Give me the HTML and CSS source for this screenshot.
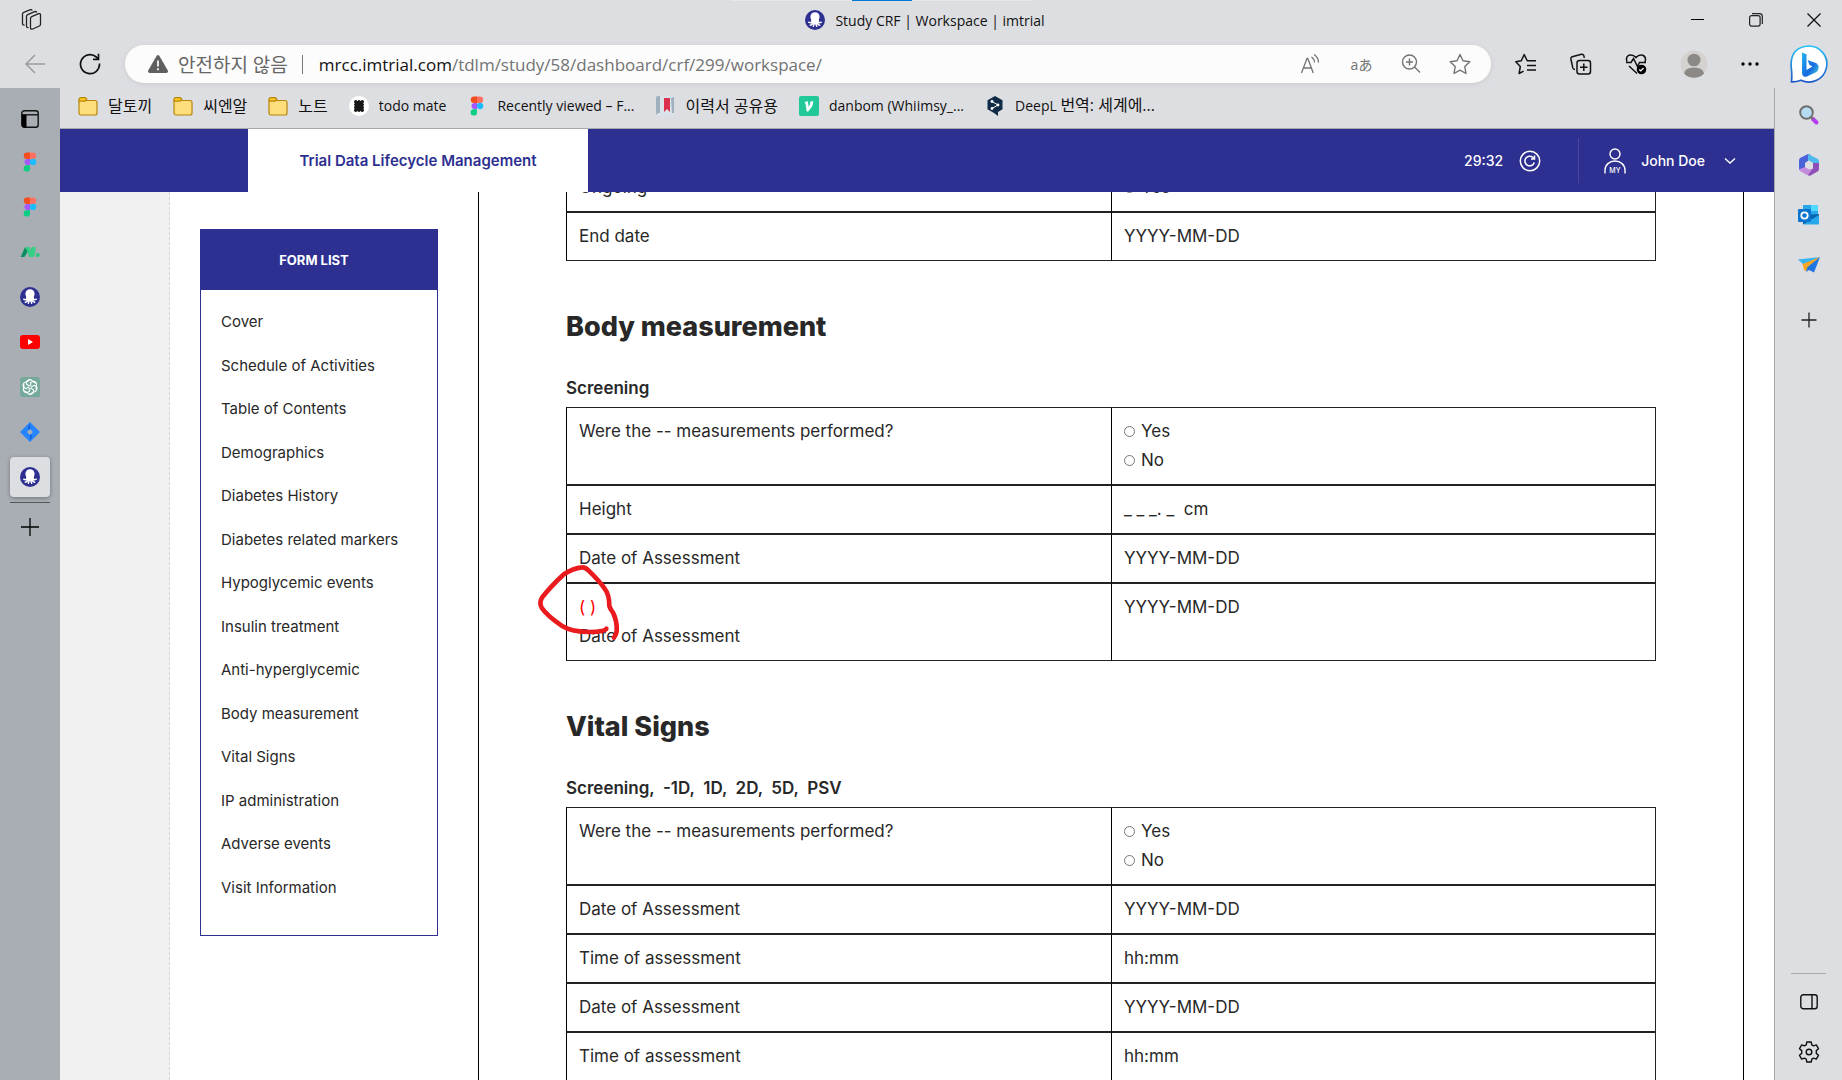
FILE: index.html
```html
<!DOCTYPE html>
<html lang="ko">
<head>
<meta charset="utf-8">
<meta name="viewport" content="width=device-width, initial-scale=1">
<title>Study CRF | Workspace | imtrial</title>
<link rel="stylesheet" href="styles.css">
</head>
<body>
<svg class="defs" aria-hidden="true">
  <symbol id="octopus" viewBox="0 0 20 20"><circle cx="10" cy="10" r="10" fill="#2d2f91"/><ellipse cx="10" cy="7" rx="4.600" ry="4.800" fill="#fff"/><path fill="#fff" d="M6.500 8.500h7l.8 4.500-4.300 1.500L5.700 13z"/><path fill="none" stroke="#fff" stroke-width="1.500" stroke-linecap="round" d="M7.500 11.500Q6.500 13.300 3.800 12.300M8 12.500Q7.500 14.800 5.300 15.200M9 13Q9 15.500 8.300 16.300M11 13Q11 15.500 11.700 16.300M12 12.500Q12.500 14.800 14.700 15.200M12.500 11.500Q13.500 13.300 16.200 12.300"/></symbol>
  <symbol id="figma" viewBox="0 0 14 20"><path fill="#f24e1e" d="M7 .5H4A3.200 3.200 0 0 0 4 6.900h3z"/><path fill="#ff7262" d="M7 .5h3a3.200 3.200 0 0 1 0 6.400H7z"/><path fill="#a259ff" d="M7 6.900H4a3.200 3.200 0 0 0 0 6.300h3z"/><circle cx="10.100" cy="10" r="3.150" fill="#1abcfe"/><path fill="#0acf83" d="M7 13.200H4A3.200 3.200 0 1 0 7 16.400z"/></symbol>
  <symbol id="folder" viewBox="0 0 20 20"><path fill="#fedd7c" stroke="#b8860b" stroke-width="1.200" d="M1 4.500h16a2 2 0 0 1 2 2V17a2 2 0 0 1-2 2H3a2 2 0 0 1-2-2z"/><path fill="#fbc826" stroke="#b8860b" stroke-width="1.200" d="M1 4.800V3.400c0-1 .8-1.800 1.800-1.800h4.500l1.500 1.500-1.800 2H1z"/></symbol>
</svg>
<div class="browser">
  <header class="titlebar">
    <button class="icon-btn" aria-label="Workspaces"><svg width="22" height="22" viewBox="0 0 22 22" fill="none" stroke="#222" stroke-width="1.300" stroke-linejoin="round"><path d="M9.500 9.300q0-1.200 1.200-1.700l7-2.900q1.800-.5 1.800 1v9.600q0 1.200-1.200 1.700l-6.500 3q-2.300.7-2.300-1.200z"/><path d="M7.500 18.500q-2 .3-2-1.600V7.300q0-1.200 1.200-1.700l7-3q1.500-.5 2 .8M3.500 16q-2 .3-2-1.600V5q0-1.200 1.200-1.700L9.500.700q1.300-.3 1.800.8"/></svg></button>
    <div class="tab-strip"><span></span></div>
    <div class="page-title"><svg width="20" height="20"><use href="#octopus"/></svg>Study CRF | Workspace | imtrial</div>
    <div class="window-controls">
      <button class="icon-btn" aria-label="Minimize"><svg width="14" height="14" stroke="#000"><path d="M0 6.500h13"/></svg></button>
      <button class="icon-btn" aria-label="Restore"><svg width="14" height="14" fill="none" stroke="#222" stroke-width="1.200"><rect x=".6" y="2.600" width="10.500" height="10.500" rx="2"/><path d="M3 .7h7.500a2.800 2.800 0 0 1 2.800 2.800V11"/></svg></button>
      <button class="icon-btn" aria-label="Close"><svg width="14" height="14" fill="none" stroke="#111" stroke-width="1.300"><path d="M.5.5l13 13M13.500.5l-13 13"/></svg></button>
    </div>
  </header>

  <div class="toolbar">
    <div class="nav-buttons">
      <button class="icon-btn" aria-label="Back"><svg width="20" height="20" fill="none" stroke="#999b9e" stroke-width="1.500"><path d="M20 10H1M10 1l-9 9 9 9"/></svg></button>
      <button class="icon-btn" aria-label="Refresh"><svg width="22" height="22" fill="none" stroke="#111" stroke-width="1.700"><path d="M20.500 10.500A9.500 9.500 0 1 1 17.300 4l2 2M19.500.800V6.300H14"/></svg></button>
    </div>
    <div class="omnibox">
      <svg width="20" height="18"><path fill="#5f5f5f" d="M8.700.8q1.300-1.500 2.600 0L19.800 15.500q.7 2-1.500 2.500H1.700q-2.200-.5-1.500-2.500z"/><path stroke="#fff" stroke-width="1.700" d="M10 5.500v6M10 13.200v2"/></svg>
      <span class="security">안전하지 않음</span>
      <span class="bar"></span>
      <label class="host" for="address">mrcc.imtrial.com</label><input id="address" class="path" type="text" value="/tdlm/study/58/dashboard/crf/299/workspace/">
      <div class="omni-actions">
        <button class="icon-btn" aria-label="Read aloud"><svg width="22" height="22" fill="none" stroke="#737373" stroke-width="1.300"><path d="M1.500 20L7 5.500h.8L13.300 20M3.500 15h7.800M11.500 4q3 2 3 5.500M14 1.500q4.500 3 4.500 8"/></svg></button>
        <button class="icon-btn translate" aria-label="Translate">aあ</button>
        <button class="icon-btn" aria-label="Zoom"><svg width="20" height="20" fill="none" stroke="#737373" stroke-width="1.400"><circle cx="8.500" cy="8" r="7"/><path d="M13.500 13l5.500 5.500M8.500 4.500v7M5 8h7"/></svg></button>
        <button class="icon-btn" aria-label="Add to favorites"><svg width="22" height="22" fill="none" stroke="#737373" stroke-width="1.400" stroke-linejoin="round"><path d="M11 1.500l3 6.300 6.800 1-5 4.800 1.200 6.900-6-3.300-6 3.300 1.200-6.900-5-4.800 6.800-1z"/></svg></button>
      </div>
    </div>
    <div class="browser-actions">
      <button class="icon-btn" aria-label="Favorites"><svg width="22" height="22" fill="none" stroke="#111" stroke-width="1.500" stroke-linejoin="round"><path d="M13 7.800h-.8L9.200 1.500 6.300 7.800l-5.500 1 4.500 4.800-1.200 6.900 4.500-2.300M13 7.800h8M12 12.500h9M12 17h9"/></svg></button>
      <button class="icon-btn" aria-label="Collections"><svg width="22" height="22" fill="none" stroke="#111" stroke-width="1.500"><rect x="7" y="7.500" width="13.500" height="13.500" rx="2.500"/><path d="M13.800 10.500v7.500M10 14.200h7.500M5 16.500q-1.700 0-2.200-1.600L.9 6Q.6 4.300 2.200 3.800L11.500 1.200q1.600-.3 2.200 1.200l.7 2.500"/></svg></button>
      <button class="icon-btn" aria-label="Browser essentials"><svg width="22" height="22" fill="none" stroke="#111" stroke-width="1.500"><path d="M2 8.500Q.3 4 4 2.200 7.800 1 11 4.500 14 1 17.800 2.200 21.700 4 20 9M1 9.500h5l2.500-4 4 8 2-4h6.500M4 13l8 7.500"/><circle cx="16.500" cy="16.500" r="4.800" fill="#000" stroke="none"/><path stroke="#fff" stroke-width="1.200" d="M14.300 16.500l1.500 1.500 2.700-3"/></svg></button>
      <button class="icon-btn" aria-label="Profile"><svg width="28" height="28"><circle cx="14" cy="14" r="13.500" fill="#d4d1ce"/><ellipse cx="14" cy="10" rx="6.500" ry="6.300" fill="#8c8885"/><path fill="#8c8885" d="M4 23.500q1-6 10-6t10 6q-4 4.300-10 4.300t-10-4.300z"/></svg></button>
      <button class="icon-btn" aria-label="Settings and more"><svg width="18" height="6"><circle cx="2" cy="3" r="1.700"/><circle cx="9" cy="3" r="1.700"/><circle cx="16" cy="3" r="1.700"/></svg></button>
    </div>
    <button class="icon-btn bing" aria-label="Bing"><svg width="38" height="38" viewBox="0 0 38 38"><defs><linearGradient id="bo" x1="0" y1="0" x2="0" y2="1"><stop offset="0" stop-color="#2cc3f5"/><stop offset="1" stop-color="#1d58c7"/></linearGradient><linearGradient id="bb" x1="0" y1="0" x2="1" y2="1"><stop offset="0" stop-color="#23b4f0"/><stop offset=".6" stop-color="#1769df"/><stop offset="1" stop-color="#42d7d9"/></linearGradient></defs><path fill="#fff" stroke="url(#bo)" stroke-width="1.700" d="M19 1A18 18 0 1 1 11 35.200Q6 37 1.500 36.800 2.200 30 1.200 22 0 2 19 1z"/><path fill="url(#bb)" d="M12 7.500l4.500 1.800V25l6-3.500-3-1.500-2-5 9 3.200q2.500 2 2 5-.3 2.500-2.500 4L17 31.500q-2 .7-3.500-.3-1.500-1-1.500-3z"/></svg></button>
  </div>

  <div class="workarea">
    <nav class="tab-rail" aria-label="Tabs">
      <button class="rail-item menu" aria-label="Tab menu"><svg width="18" height="18" fill="none" stroke="#111" stroke-width="1.400"><rect x=".8" y=".8" width="16.400" height="16.400" rx="2.500"/><path d="M1 4.800h16"/><path fill="#000" stroke="none" d="M1 5h4.500v12.500H3q-2 0-2-2z"/></svg></button>
      <button class="rail-item" aria-label="Figma"><svg width="14" height="20"><use href="#figma"/></svg></button>
      <button class="rail-item" aria-label="Figma"><svg width="14" height="20"><use href="#figma"/></svg></button>
      <button class="rail-item" aria-label="Notes"><svg width="20" height="12"><path fill="#35cf85" d="M5 1.500Q6 .7 8 .7q1.500 0 2 2l.3 1 1-1.700Q12.300.7 14 .7q2 0 1.700 2L14.500 10q-.3 1-1.500 1h-3q-1 0-1.200-1l-1-4-3 4.500Q4.300 11 3.500 11H.7z"/><path fill="#0f8a63" d="M5 1.500l2.500 4L5 10q-.5 1-1.500 1H.7z"/><circle cx="17.800" cy="9" r="2" fill="#2bc77e"/></svg></button>
      <button class="rail-item" aria-label="imtrial"><svg width="20" height="20"><use href="#octopus"/></svg></button>
      <button class="rail-item" aria-label="YouTube"><svg width="20" height="14"><rect width="20" height="14" rx="3" fill="#f00"/><path fill="#fff" d="M8 4l5 3-5 3z"/></svg></button>
      <button class="rail-item" aria-label="ChatGPT"><svg width="20" height="20"><path fill="#75a99c" d="M3 0h14a3 3 0 0 1 3 3v17H3a3 3 0 0 1-3-3V3a3 3 0 0 1 3-3z"/><g fill="none" stroke="#fff" stroke-width="1.100"><path id="knot" d="M9.800 9L6.500 7.200V5.800A3.200 3.200 0 0 1 12.500 4.300L16 6.300"/><use href="#knot" transform="rotate(60 10 10)"/><use href="#knot" transform="rotate(120 10 10)"/><use href="#knot" transform="rotate(180 10 10)"/><use href="#knot" transform="rotate(240 10 10)"/><use href="#knot" transform="rotate(300 10 10)"/></g></svg></button>
      <button class="rail-item" aria-label="Jira"><svg width="20" height="20"><path fill="#2684ff" fill-rule="evenodd" d="M10 0l10 10-10 10L0 10zM10 7l-3 3 3 3 3-3z"/><path fill="#0f5acc" d="M10 7V2q-3 3.500-.8 5.800zM10 13v5q3-3.500.8-5.800z"/></svg></button>
      <button class="rail-item active" aria-label="Study CRF"><svg width="20" height="20"><use href="#octopus"/></svg></button>
      <hr class="rail-line">
      <button class="rail-item" aria-label="New tab"><svg width="18" height="18" stroke="#000" stroke-width="1.300"><path d="M9 0v18M0 9h18"/></svg></button>
    </nav>

    <div class="center">
      <nav class="bookmarks" aria-label="Bookmarks">
        <a class="hangul" href="#b1"><svg width="20" height="20"><use href="#folder"/></svg>달토끼</a>
        <a class="hangul" href="#b2"><svg width="20" height="20"><use href="#folder"/></svg>씨엔알</a>
        <a class="hangul" href="#b3"><svg width="20" height="20"><use href="#folder"/></svg>노트</a>
        <a href="#b4"><svg width="20" height="20"><circle cx="10" cy="10" r="10" fill="#fff"/><g fill="#181818"><rect x="6" y="5" width="8" height="10"/><circle cx="6.700" cy="5.700" r="1.700"/><circle cx="10" cy="5.700" r="1.700"/><circle cx="13.300" cy="5.700" r="1.700"/><circle cx="6.700" cy="8.600" r="1.700"/><circle cx="13.300" cy="8.600" r="1.700"/><circle cx="6.700" cy="11.500" r="1.700"/><circle cx="13.300" cy="11.500" r="1.700"/><circle cx="6.700" cy="14.300" r="1.700"/><circle cx="10" cy="14.300" r="1.700"/><circle cx="13.300" cy="14.300" r="1.700"/></g></svg>todo mate</a>
        <a href="#b5"><svg width="20" height="20"><use href="#figma"/></svg>Recently viewed – F...</a>
        <a class="hangul" href="#b6"><svg width="20" height="20"><rect x="1" width="18" height="20" rx="2" fill="#dbe3ea"/><path fill="#9fb0bf" d="M3 0h2v17H3l-2 2V2q0-2 2-2zM16 2l3-1v16h-2z"/><path fill="#dc2f4b" d="M9 2h6v14l-3-3-3 3z"/></svg>이력서 공유용</a>
        <a href="#b7"><svg width="20" height="20"><rect width="20" height="20" rx="2" fill="#20c997"/><path fill="#fff" d="M5.500 6l3.300-.7 1 5.700q2-2.700 1.300-5.200l3-.8q1.200 4-5 10.500H7.700L6.500 7.700z"/></svg>danbom (Whiimsy_...</a>
        <a href="#b8"><svg width="20" height="20"><path fill="#0f2b46" d="M10 0l7.500 4.300v8.900L13 16v4l-4-3-6.500-3.800V4.300z"/><path stroke="#fff" fill="none" d="M7 5.500l6 3.500-6 3.500"/><g fill="#fff"><circle cx="7" cy="5.500" r="1.400"/><circle cx="13" cy="9" r="1.400"/><circle cx="7" cy="12.500" r="1.400"/></g></svg><span>DeepL <span class="hangul">번역: 세계에...</span></span></a>
      </nav>

      <div class="app">
        <header class="app-header">
          <a class="app-tab" href="#tdlm">Trial Data Lifecycle Management</a>
          <div class="session">
            <span>29:32</span>
            <button class="icon-btn" aria-label="Extend session"><svg width="22" height="22" fill="none" stroke="#fff" stroke-width="1.500"><circle cx="11" cy="11" r="9.700"/><path d="M15.300 12.500A4.800 4.800 0 1 1 14 7.500l1.200 1M15.500 5.500v3.600H12"/></svg></button>
          </div>
          <button class="user"><svg width="22" height="26" fill="none" stroke="#fff" stroke-width="1.400"><circle cx="11" cy="6" r="5"/><path d="M1 25.500V22a10 9 0 0 1 20 0v3.500"/><text x="11" y="25" class="my">MY</text></svg>John Doe<svg width="12" height="8" fill="none" stroke="#fff" stroke-width="1.400"><path d="M1 1.500l5 4.500 5-4.500"/></svg></button>
        </header>

        <div class="workspace">
          <aside class="form-list">
            <h2>FORM LIST</h2>
            <ul>
              <li><a href="#f1">Cover</a></li>
              <li><a href="#f2">Schedule of Activities</a></li>
              <li><a href="#f3">Table of Contents</a></li>
              <li><a href="#f4">Demographics</a></li>
              <li><a href="#f5">Diabetes History</a></li>
              <li><a href="#f6">Diabetes related markers</a></li>
              <li><a href="#f7">Hypoglycemic events</a></li>
              <li><a href="#f8">Insulin treatment</a></li>
              <li><a href="#f9">Anti-hyperglycemic</a></li>
              <li><a href="#body">Body measurement</a></li>
              <li><a href="#vital">Vital Signs</a></li>
              <li><a href="#f12">IP administration</a></li>
              <li><a href="#f13">Adverse events</a></li>
              <li><a href="#f14">Visit Information</a></li>
            </ul>
          </aside>
          <main class="sheet">
            <table>
              <tr><td>Ongoing</td><td><label><input type="radio" name="ongoing">Yes</label></td></tr>
              <tr><td>End date</td><td>YYYY-MM-DD</td></tr>
            </table>
            <h1 id="body">Body measurement</h1>
            <h3>Screening</h3>
            <table>
              <tr><td>Were the -- measurements performed?</td><td><label><input type="radio" name="bm">Yes</label><label><input type="radio" name="bm">No</label></td></tr>
              <tr><td>Height</td><td>_ _ _. _&nbsp; cm</td></tr>
              <tr><td>Date of Assessment</td><td>YYYY-MM-DD</td></tr>
              <tr><td class="marked"><span class="missing">( )</span><br>Date of Assessment<svg class="pen" width="87" height="80" viewBox="45 250 261 240" aria-hidden="true"><path d="M259 447Q256 456 210 457Q155 457 128 440Q80 407 65 384Q57 370 66 354Q90 322 130 285Q160 265 186 263Q196 262 206 273Q240 306 254 327Q268 345 268 379Q271 389 279 399Q292 425 290 455Q289 465 282 474"/></svg></td><td>YYYY-MM-DD</td></tr>
            </table>
            <h1 id="vital">Vital Signs</h1>
            <h3>Screening,  -1D,  1D,  2D,  5D,  PSV</h3>
            <table>
              <tr><td>Were the -- measurements performed?</td><td><label><input type="radio" name="vs">Yes</label><label><input type="radio" name="vs">No</label></td></tr>
              <tr><td>Date of Assessment</td><td>YYYY-MM-DD</td></tr>
              <tr><td>Time of assessment</td><td>hh:mm</td></tr>
              <tr><td>Date of Assessment</td><td>YYYY-MM-DD</td></tr>
              <tr><td>Time of assessment</td><td>hh:mm</td></tr>
            </table>
          </main>
        </div>
      </div>
    </div>

    <aside class="side-rail" aria-label="Sidebar">
      <button class="icon-btn" aria-label="Search"><svg width="22" height="22"><path stroke="#b43df0" stroke-width="4" stroke-linecap="round" d="M15 15l3.500 3.500"/><path stroke="#777" stroke-width="2.500" d="M12 12l3 3"/><circle cx="8.500" cy="8.500" r="6.300" fill="#b5dbf0" stroke="#6f6f6f" stroke-width="2"/></svg></button>
      <button class="icon-btn" aria-label="Microsoft 365"><svg width="22" height="22"><path fill="#4a63d8" d="M10 0l3 1-3 6-3 2v5l-6 1.500V6q0-1.500 1.500-2.300z"/><path fill="#4fb9ee" d="M10 0l9 4.500q2 1 2 3V13l-6-4-5-3z"/><path fill="#8e4fb8" d="M21 9v6.500q0 1-1.500 2l-7 4q-1 .7-2 0l-3-2 7.500-5V9z"/><path fill="#c48bdc" d="M1 15.500L7 13l4 2.500 4-1-5 6.500q-1 0-2-.5l-6-3.500q-1-.7-1-1.500z"/><circle cx="11" cy="11" r="3.500" fill="#dddee2"/></svg></button>
      <button class="icon-btn" aria-label="Outlook"><svg width="22" height="22"><path fill="#28a8ea" d="M5 1h15v12H5z"/><path fill="#50d9ff" d="M13 1h7v6h-7z"/><path fill="#0a64ad" d="M5 11l16-1v10H5z"/><path fill="#28a8ea" d="M5 20.500L21 11v9.500z"/><rect y="5" width="13" height="13" rx="1" fill="#0a74cf"/><circle cx="6.500" cy="11.500" r="3.200" fill="none" stroke="#fff" stroke-width="1.800"/></svg></button>
      <button class="icon-btn" aria-label="Drop"><svg width="22" height="16"><path fill="#36b4f0" d="M0 2.500L22 0 6 8z"/><path fill="#f5a623" d="M4.500 7L22 0 8 14l-2-1z"/><path fill="#1f76e0" d="M22 0l-6 15.500-5-2.500-3 2 1.500-5z"/></svg></button>
      <button class="icon-btn add" aria-label="Customize"><svg width="22" height="22" stroke="#222" stroke-width="1.300"><path d="M11 3.500v15M3.500 11h15"/></svg></button>
      <hr>
      <button class="icon-btn" aria-label="Hide sidebar"><svg width="18" height="16" fill="none" stroke="#111" stroke-width="1.400"><rect x=".8" y=".8" width="16.400" height="14" rx="2.500"/><path d="M12 1v14"/></svg></button>
      <button class="icon-btn" aria-label="Sidebar settings"><svg width="22" height="22" viewBox="0 0 22 22" fill="none" stroke="#111" stroke-width="1.400" stroke-linejoin="round"><circle cx="11" cy="11" r="2.800"/><path d="M8.800 1h4.400l.6 2.900 1.700 1 2.800-1 2.200 3.800-2.200 1.900v2.800l2.200 1.900-2.200 3.800-2.800-1-1.700 1-.6 2.900H8.800l-.6-2.900-1.700-1-2.800 1-2.200-3.800 2.200-1.900V9.600L1.500 7.700l2.200-3.800 2.800 1 1.700-1z"/></svg></button>
    </aside>
  </div>
</div>
</body>
</html>
```
FILE: styles.css
```css
* { box-sizing: border-box; }
body {
  margin: 0;
  color: #282828;
  font-family: Inter, "Noto Sans CJK KR", sans-serif;
}
a { color: inherit; text-decoration: none; }
svg { display: block; flex: none; }
.defs { position: absolute; width: 0; height: 0; }
button { margin: 0; padding: 0; border: 0; background: none; color: inherit; font: inherit; }
.icon-btn { display: flex; align-items: center; justify-content: center; flex: none; }

.browser {
  display: flex;
  flex-direction: column;
  height: 100vh;
  overflow: hidden;
  background: #dddee2;
  font-family: "Open Sans", "Noto Sans CJK KR", sans-serif;
  color: #111;
}

/* Title bar */
.titlebar {
  position: relative;
  display: flex;
  align-items: center;
  justify-content: space-between;
  height: 40px;
  padding: 0 21px;
}
.tab-strip {
  position: absolute;
  top: 0;
  left: 731px;
  display: flex;
  justify-content: center;
  width: 302px;
  height: 1px;
  background: #e8e8ea;
}
.tab-strip span { width: 60px; background: #0078d7; }
.page-title {
  display: flex;
  align-items: center;
  gap: 10px;
  margin-left: 116px;
  font-size: 14px;
}
.window-controls { display: flex; gap: 44px; }

/* Toolbar */
.toolbar { display: flex; align-items: center; height: 48px; padding: 0 14px 0 25px; }
.nav-buttons { display: flex; align-items: center; gap: 34px; width: 100px; }
.omnibox {
  display: flex;
  align-items: center;
  flex: 1;
  height: 38px;
  padding: 0 20px 0 23px;
  border-radius: 19px;
  background: #fcfcfc;
  box-shadow: 0 1px 5px #c9cace;
  font-size: 17px;
}
.security { margin-left: 10px; color: #666; font-size: 19px; }
.bar { width: 1px; height: 19px; margin: 0 16px 0 14px; background: #777; }
.path {
  flex: 1;
  min-width: 0;
  padding: 0;
  border: 0;
  background: none;
  color: #737373;
  font: inherit;
}
.omni-actions { display: flex; align-items: center; gap: 28px; }
.translate { width: 23px; color: #737373; font-size: 14px; white-space: nowrap; }
.browser-actions { display: flex; align-items: center; gap: 33px; margin-left: 24px; }
.bing { margin-left: 31px; }

/* Work area */
.workarea { display: flex; flex: 1; min-height: 0; }
.tab-rail {
  display: flex;
  flex-direction: column;
  align-items: center;
  flex: none;
  width: 60px;
  padding-top: 11px;
  background: #a9aeb5;
}
.rail-item {
  display: flex;
  align-items: center;
  justify-content: center;
  width: 40px;
  height: 40px;
  margin-bottom: 5px;
  border-radius: 4px;
}
.rail-item.menu { margin-bottom: 3px; }
.rail-item.active { background: #dddee2; box-shadow: 0 1px 4px #70747a; }
.rail-line { width: 40px; height: 1px; margin: 0 0 4px; border: 0; background: #555; }
.center { display: flex; flex-direction: column; flex: 1; min-width: 0; }
.bookmarks {
  display: flex;
  align-items: center;
  gap: 21px;
  flex: none;
  height: 41px;
  padding: 0 18px 5px;
  border-bottom: 1px solid #a6a8ab;
  font-size: 14px;
  line-height: 20px;
  white-space: nowrap;
}
.bookmarks a { display: flex; align-items: center; gap: 10px; }
.bookmarks .hangul { font-size: 16px; }
.side-rail {
  display: flex;
  flex-direction: column;
  align-items: center;
  gap: 28px;
  flex: none;
  width: 68px;
  padding: 16px 0 17px;
  border-left: 1px solid #a6a8ab;
}
.side-rail hr { width: 35px; height: 1px; margin: auto 0 -11px; border: 0; background: #a6a8ab; }
.side-rail button { height: 22px; }
.side-rail .add { height: 32px; }

/* Application */
.app {
  display: flex;
  flex-direction: column;
  flex: 1;
  min-height: 0;
  background: #fff;
  color: #282828;
  font-family: Inter, sans-serif;
}
.app-header {
  position: relative;
  z-index: 1;
  display: flex;
  align-items: center;
  flex: none;
  height: 63px;
  padding: 0 38px 0 188px;
  background: #2d2f91;
  color: #fff;
  font-size: 14px;
  font-weight: 500;
}
.app-tab {
  display: flex;
  align-items: center;
  justify-content: center;
  align-self: stretch;
  width: 340px;
  background: #fff;
  color: #2d2f91;
  font-size: 15px;
  font-weight: 600;
}
.session { display: flex; align-items: center; gap: 16px; margin-left: auto; }
.user {
  display: flex;
  align-items: center;
  gap: 15px;
  height: 45px;
  margin-left: 37px;
  padding-left: 25px;
  border-left: 1px solid #47499f;
}
.user svg:last-child { margin-left: 4px; }
.my { fill: #fff; stroke: none; font-size: 7px; text-anchor: middle; }

.workspace { display: flex; flex: 1; min-height: 0; padding-right: 30px; }
.workspace::before { content: ""; flex: none; width: 109px; background: #f1f1f1; border-right: 1px dashed #d5d5d5; }
.form-list { flex: none; align-self: flex-start; width: 238px; margin: 37px 40px 0 30px; border: 1px solid #2d2f91; }
.form-list h2 {
  margin: 0;
  padding-right: 10px;
  background: #2d2f91;
  color: #fff;
  font-size: 13px;
  font-weight: 700;
  line-height: 60px;
  text-align: center;
}
.form-list ul {
  display: flex;
  flex-direction: column;
  justify-content: space-between;
  min-height: 645px;
  margin: 0;
  padding: 20px 20px 35px;
  list-style: none;
}
.form-list li { font-size: 15px; line-height: 24px; }
.sheet { flex: 1; min-width: 0; padding: 0 87px; border: solid #000; border-width: 0 1px; font-size: 17px; line-height: 29px; }
.sheet table { width: 100%; table-layout: fixed; border-spacing: 0; }
.sheet table:first-child { margin-top: -29px; }
.sheet td { padding: 9px 12px; border: 1px solid #222; border-left-color: #000; vertical-align: top; }
.sheet td:first-child { border-right: 0; }
.sheet label { display: flex; align-items: center; gap: 6px; }
.sheet input {
  appearance: none;
  width: 11px;
  height: 11px;
  margin: 0;
  border: 1px solid #767676;
  border-radius: 50%;
  background: #fff;
}
.sheet h1 { margin: 46px 0 0; font-size: 27px; font-weight: 800; line-height: 40px; }
.sheet h3 { margin: 27px 0 4px; font-size: 17px; font-weight: 600; line-height: 29px; white-space: pre; }
.marked { position: relative; }
.missing { color: #f00; }
.pen { position: absolute; top: -21px; left: -32px; fill: none; stroke: #ea1b1e; stroke-width: 14px; stroke-linecap: round; stroke-linejoin: round; }
```
